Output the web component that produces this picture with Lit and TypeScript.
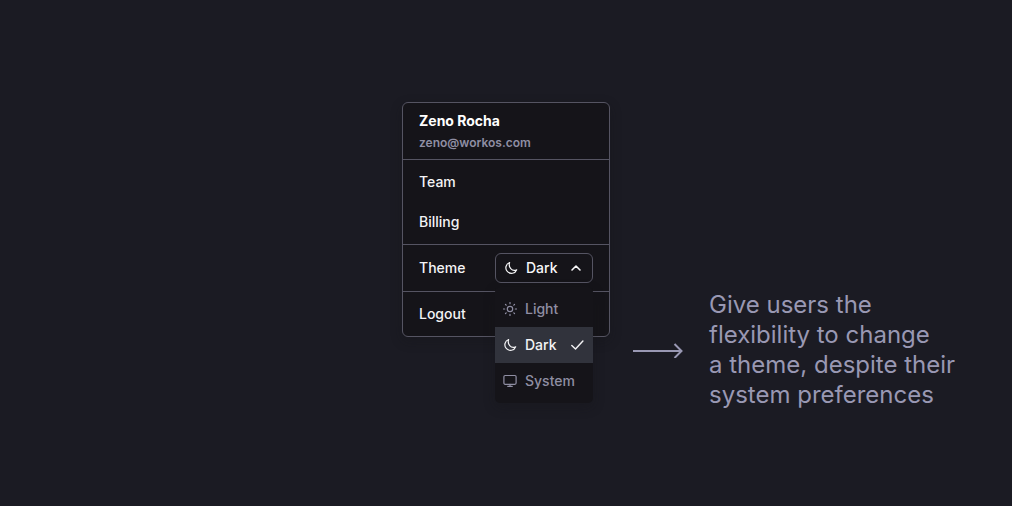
import { LitElement, html, css, svg, nothing } from "lit";
import { customElement, state } from "lit/decorators.js";

type Theme = "Light" | "Dark" | "System";

const icons = {
  Light: svg`<circle cx="7" cy="7" r="2.7"/><path d="M7 .5v1.200M7 12.300v1.200M.5 7h1.200M12.300 7h1.200M2.500 2.500l.7.7M10.800 10.800l.7.7M11.500 2.500l-.7.7M3.200 10.800l-.7.7"/>`,
  Dark: svg`<path d="M5.600 1.500A5.600 5.600 0 1 0 12.700 8.800C10.700 9.700 8.200 9.300 6.700 7.600 5.300 6 4.900 3.600 5.600 1.500Z"/>`,
  System: svg`<rect x=".9" y="1.500" width="12.200" height="8.800" rx="1.200"/><path d="M7 10.300v2M4.700 12.300h4.600"/>`,
};

const icon = (theme: Theme) => html`
  <svg class="icon" viewBox="0 0 14 14" aria-hidden="true">${icons[theme]}</svg>
`;

@customElement("theme-select")
export class ThemeSelect extends LitElement {
  static styles = css`
    :host {
      display: block;
      position: relative;
      width: 98px;
    }
    button {
      font: inherit;
      color: inherit;
      cursor: pointer;
      display: flex;
      align-items: center;
      box-sizing: border-box;
      width: 100%;
      margin: 0;
    }
    .trigger {
      height: 30px;
      gap: 8px;
      padding: 0 10px 0 8px;
      color: #f7f7f8;
      background: #151419;
      border: 1px solid #555462;
      border-radius: 6px;
    }
    .list {
      position: absolute;
      top: 100%;
      left: 0;
      right: 0;
      z-index: 1;
      margin-top: 4px;
      padding: 4px 0;
      background: #151419;
      border-radius: 5px;
      box-shadow: 0 4px 12px rgba(20, 20, 22, 0.3);
    }
    .option {
      height: 36px;
      gap: 8px;
      padding: 0 8px;
      color: #8f8ea3;
      background: none;
      border: 0;
    }
    .option.selected {
      color: #f3f3f5;
      background: #31333c;
    }
    .icon {
      flex: none;
      width: 14px;
      height: 14px;
      fill: none;
      stroke: currentColor;
      stroke-width: 1.2;
      stroke-linecap: round;
      stroke-linejoin: round;
    }
    .mark {
      margin-left: auto;
    }
    .check {
      stroke-width: 1.4;
    }
    .chevron {
      width: 12px;
      height: 12px;
      stroke-width: 1.6;
    }
  `;

  @state() private open = true;
  @state() private value: Theme = "Dark";

  private choose(theme: Theme) {
    this.value = theme;
    this.open = false;
  }

  render() {
    const themes: Theme[] = ["Light", "Dark", "System"];
    return html`
      <button
        class="trigger"
        type="button"
        aria-label="Theme: ${this.value}"
        aria-haspopup="listbox"
        aria-expanded=${this.open ? "true" : "false"}
        @click=${() => (this.open = !this.open)}
      >
        ${icon(this.value)}
        <span>${this.value}</span>
        <svg class="icon mark chevron" viewBox="0 0 12 12" aria-hidden="true">
          <path d="M2 8l4-4 4 4" />
        </svg>
      </button>
      ${this.open
        ? html`<div class="list" role="listbox" aria-label="Theme">
            ${themes.map(
              (theme) => html`
                <button
                  class="option ${theme === this.value ? "selected" : ""}"
                  type="button"
                  role="option"
                  aria-selected=${theme === this.value ? "true" : "false"}
                  @click=${() => this.choose(theme)}
                >
                  ${icon(theme)}
                  <span>${theme}</span>
                  ${theme === this.value
                    ? html`<svg class="icon mark check" viewBox="0 0 14 14" aria-hidden="true">
                        <path d="M.8 7.500L4.500 11 11.900 3" />
                      </svg>`
                    : nothing}
                </button>
              `
            )}
          </div>`
        : nothing}
    `;
  }
}

@customElement("app-root")
export class AppRoot extends LitElement {
  static styles = css`
    :host {
      display: grid;
      grid-template-columns: 1fr 208px 1fr;
      align-items: start;
      box-sizing: border-box;
      min-height: 100vh;
      padding: 102px 0;
      background: #1b1b23;
      font-family: Inter, sans-serif;
      font-size: 14px;
      font-weight: 500;
      line-height: 20px;
    }
    .menu {
      grid-column: 2;
      color: #f3f3f5;
      background: #151419;
      border: 1px solid #555462;
      border-radius: 6px;
      box-shadow: 0 4px 12px rgba(20, 20, 22, 0.3);
    }
    .section {
      padding: 2px 16px;
    }
    .section + .section {
      border-top: 1px solid #555462;
    }
    .account {
      display: grid;
      gap: 2px;
      padding: 8px 16px 6px;
    }
    .name,
    .email {
      margin: 0;
    }
    .name {
      color: #ffffff;
      font-weight: 700;
    }
    .email {
      font-size: 12px;
      font-weight: 600;
      color: #8f8ea3;
    }
    .item {
      display: flex;
      align-items: center;
      height: 40px;
      color: inherit;
      text-decoration: none;
    }
    .theme {
      display: flex;
      align-items: center;
      justify-content: space-between;
      padding: 8px 16px;
    }
    .note {
      grid-column: 3;
      display: flex;
      align-items: center;
      gap: 26px;
      margin-top: 188px;
      padding-left: 23px;
      color: #9998b3;
    }
    .arrow {
      flex: none;
      width: 50px;
      height: 16px;
      fill: none;
      stroke: currentColor;
      stroke-width: 2;
    }
    .caption {
      margin: 0;
      font-size: 24px;
      font-weight: 400;
      line-height: 30px;
    }
  `;

  render() {
    return html`
      <nav class="menu" aria-label="Account">
        <div class="section account">
          <p class="name">Zeno Rocha</p>
          <p class="email">zeno@workos.com</p>
        </div>
        <div class="section">
          <a class="item" href="#team">Team</a>
          <a class="item" href="#billing">Billing</a>
        </div>
        <div class="section theme">
          <span>Theme</span>
          <theme-select></theme-select>
        </div>
        <div class="section">
          <a class="item" href="#logout">Logout</a>
        </div>
      </nav>
      <div class="note">
        <svg class="arrow" viewBox="0 0 50 16" aria-hidden="true">
          <path d="M0 9h48M41.500 2l7 7-7 7" />
        </svg>
        <p class="caption">
          Give users the<br />flexibility to change<br />a theme, despite their<br />system preferences
        </p>
      </div>
    `;
  }
}
